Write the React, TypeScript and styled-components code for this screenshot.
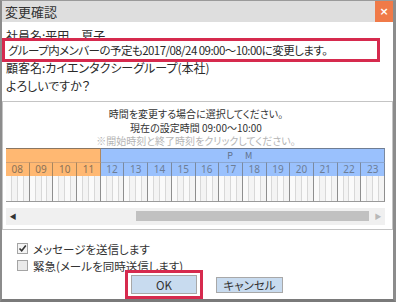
import styled, { createGlobalStyle } from 'styled-components';

const GlobalStyle = createGlobalStyle`
  html, body {
    margin: 0;
    padding: 0;
    background: #ffffff;
  }
  body {
    font-family: "Noto Sans CJK JP", "Noto Sans", sans-serif;
    color: #222;
  }
`;

const HOURS = ['08', '09', '10', '11', '12', '13', '14', '15', '16', '17', '18', '19', '20', '21', '22', '23'];

const App = () => {
  return (
    <>
      <GlobalStyle />
      <Window>
        <TitleBar>
          <Title>変更確認</Title>
          <CloseButton>×</CloseButton>
        </TitleBar>
        <Body>
          <Line>社員名:平田　夏子</Line>
          <Highlight>
            <Line $tight>グループ内メンバーの予定も2017/08/24 09:00～10:00に変更します。</Line>
          </Highlight>
          <Line $pull>顧客名:カイエンタクシーグループ(本社)</Line>
          <Line>よろしいですか？</Line>

          <Panel>
            <Note>時間を変更する場合に選択してください。</Note>
            <Note>現在の設定時間 09:00～10:00</Note>
            <Note $muted>※開始時刻と終了時刻をクリックしてください。</Note>
            <Grid>
              <Period $am />
              <Period>P M</Period>
              {HOURS.map((h, i) => (
                <Hour key={h} $am={i < 4}>
                  {h}
                </Hour>
              ))}
              {HOURS.map((h) => (
                <Slot key={h}>
                  <Quarter />
                  <Quarter />
                  <Quarter />
                  <Quarter />
                </Slot>
              ))}
            </Grid>
            <ScrollBar>
              <Arrow>◀</Arrow>
              <Track>
                <Thumb />
              </Track>
              <Arrow $dim>▶</Arrow>
            </ScrollBar>
          </Panel>

          <Options>
            <Option>
              <CheckBox $checked>
                <svg width="9" height="9" viewBox="0 0 9 9">
                  <path d="M1.5 4.5 L3.7 6.8 L7.8 1.6" fill="none" stroke="#333" strokeWidth="1.6" />
                </svg>
              </CheckBox>
              メッセージを送信します
            </Option>
            <Option>
              <CheckBox />
              緊急(メールを同時送信します)
            </Option>
          </Options>

          <Actions>
            <Marked>
              <Button>OK</Button>
            </Marked>
            <Button $small>キャンセル</Button>
          </Actions>
        </Body>
      </Window>
    </>
  );
};

export default App;

const Window = styled.div`
  width: 396px;
  height: 302px;
  box-sizing: border-box;
  border-left: 2px solid #8c8c8c;
  border-right: 3px solid #8c8c8c;
  border-top: 1px solid #9a9a9a;
  border-bottom: 3px solid #7a7a7a;
  display: flex;
  flex-direction: column;
  overflow: hidden;
  background: #fff;
`;

const TitleBar = styled.div`
  height: 21px;
  flex-shrink: 0;
  background: #dedede;
  display: flex;
  align-items: center;
  justify-content: space-between;
`;

const Title = styled.div`
  font-size: 13px;
  color: #333;
  padding-left: 3px;
`;

const CloseButton = styled.div`
  width: 18px;
  height: 21px;
  background: #f07a48;
  color: #fff;
  font-size: 11px;
  font-weight: bold;
  font-family: "DejaVu Sans", sans-serif;
  display: flex;
  align-items: center;
  justify-content: center;
`;

const Body = styled.div`
  flex: 1;
  display: flex;
  flex-direction: column;
  padding-top: 5px;
`;

const Line = styled.div<{ $pull?: boolean; $tight?: boolean }>`
  height: 18px;
  line-height: 18px;
  font-size: ${(p) => (p.$tight ? '11.5px' : '12px')};
  letter-spacing: ${(p) => (p.$tight ? '-0.55px' : '0')};
  padding-left: 4px;
  white-space: nowrap;
  font-feature-settings: "palt";
  color: #2a2a2a;
  margin-top: ${(p) => (p.$pull ? '-3px' : '0')};
`;

const Highlight = styled.div`
  position: relative;
  z-index: 1;
  margin-top: -7px;
  width: 372px;
  border: 3px solid #d62a4e;
  background: #fff;
  ${Line} {
    padding-left: 3px;
  }
`;

const Panel = styled.div`
  margin: 6px 0 0 0;
  height: 129px;
  box-sizing: border-box;
  border: 1px solid #c4c4c4;
  padding: 5px 6px 0 3px;
  display: flex;
  flex-direction: column;
`;

const Note = styled.div<{ $muted?: boolean }>`
  text-align: center;
  font-size: 10px;
  height: 13.5px;
  line-height: 13.5px;
  white-space: nowrap;
  font-feature-settings: "palt";
  color: ${(p) => (p.$muted ? '#b4b4b4' : '#333')};
`;

const Grid = styled.div`
  width: 379px;
  display: grid;
  grid-template-columns: repeat(16, 1fr);
  grid-template-rows: 14px 14px 26px;
`;

const Period = styled.div<{ $am?: boolean }>`
  grid-column: ${(p) => (p.$am ? 'span 4' : 'span 12')};
  background: ${(p) => (p.$am ? '#ffb872' : '#9ac1fd')};
  border-top: 1px solid ${(p) => (p.$am ? '#8a7662' : '#6f7d93')};
  border-right: 1px solid ${(p) => (p.$am ? '#b08860' : '#7b8aa0')};
  box-sizing: border-box;
  font-size: 9px;
  letter-spacing: 5px;
  color: #5f708a;
  text-align: center;
  line-height: 13px;
`;

const Hour = styled.div<{ $am?: boolean }>`
  background: ${(p) => (p.$am ? '#ffb872' : '#9ac1fd')};
  border-top: 1px solid ${(p) => (p.$am ? '#d4a070' : '#8aa6d0')};
  border-right: 1px solid ${(p) => (p.$am ? '#a8865e' : '#7b8aa0')};
  box-sizing: border-box;
  font-size: 10px;
  font-family: "Noto Sans", sans-serif;
  color: ${(p) => (p.$am ? '#8a7258' : '#6d7e96')};
  text-align: center;
  line-height: 13px;
`;

const Slot = styled.div`
  display: flex;
  border-right: 1px solid #8e8e8e;
  border-bottom: 1px solid #9a9a9a;
  box-sizing: border-box;
  &:first-of-type {
    border-left: 1px solid #8e8e8e;
  }
`;

const Quarter = styled.div`
  flex: 1;
  background: #f4f4f4;
  border-right: 1px solid #d8d8d8;
  &:nth-child(odd) {
    background: #fafafa;
  }
  &:last-child {
    border-right: none;
  }
`;

const ScrollBar = styled.div`
  margin-top: 6px;
  width: 379px;
  height: 17px;
  background: #f0f0f0;
  display: flex;
  align-items: center;
`;

const Arrow = styled.div<{ $dim?: boolean }>`
  width: 14px;
  font-size: 7px;
  text-align: center;
  color: ${(p) => (p.$dim ? '#b8b8b8' : '#333')};
`;

const Track = styled.div`
  flex: 1;
  height: 10px;
  display: flex;
  padding-left: 116px;
`;

const Thumb = styled.div`
  flex: 1;
  background: #c1c1c1;
  margin-right: 2px;
`;

const Options = styled.div`
  margin-top: 10px;
  padding-left: 15px;
  display: flex;
  flex-direction: column;
`;

const Option = styled.label`
  display: flex;
  align-items: center;
  gap: 5px;
  height: 17px;
  font-size: 11.5px;
  font-feature-settings: "palt";
  color: #333;
  white-space: nowrap;
`;

const CheckBox = styled.span<{ $checked?: boolean }>`
  width: 9px;
  height: 9px;
  border: 1px solid #a4a4a4;
  background: ${(p) => (p.$checked ? '#f4f4f4' : '#eaeaea')};
  display: flex;
  align-items: center;
  justify-content: center;
`;

const Actions = styled.div`
  display: flex;
  align-items: center;
  gap: 13px;
  padding-left: 123px;
  margin-top: -4px;
`;

const Marked = styled.div`
  border: 3px solid #d62a4e;
  padding: 2px 3px;
  position: relative;
  z-index: 1;
`;

const Button = styled.div<{ $small?: boolean }>`
  width: ${(p) => (p.$small ? '65px' : '64px')};
  height: ${(p) => (p.$small ? '14px' : '17px')};
  border: 1px solid #a8a8a8;
  background: #c8dbef;
  font-size: 11.5px;
  color: #333;
  display: flex;
  align-items: center;
  justify-content: center;
  font-feature-settings: "palt";
`;
